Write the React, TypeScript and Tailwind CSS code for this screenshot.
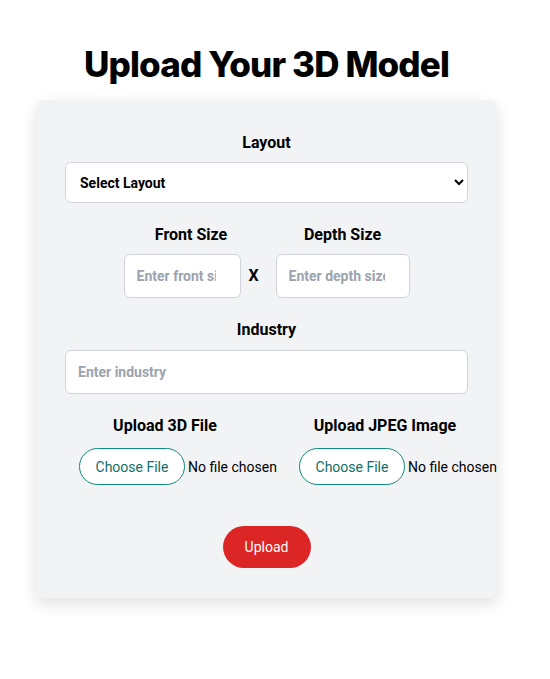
import { useState } from "react";

function FilePicker({ label }: { label: string }) {
  const [name, setName] = useState<string | null>(null);
  return (
    <div className="flex w-[220px] flex-col items-center">
      <span className="text-base font-bold leading-6 text-black">{label}</span>
      <label className="mt-[10px] flex w-full cursor-pointer items-center pl-6">
        <span className="flex h-[37px] w-[106px] shrink-0 items-center justify-center rounded-full border border-[#0f8a7e] bg-white text-sm text-[#0f6f66]">
          Choose File
        </span>
        <span className="ml-[3px] whitespace-nowrap text-sm text-black">
          {name ?? "No file chosen"}
        </span>
        <input
          type="file"
          className="hidden"
          onChange={(e) => setName(e.target.files?.[0]?.name ?? null)}
        />
      </label>
    </div>
  );
}

export default function App() {
  return (
    <div className="min-h-[679px] w-[533px] bg-white font-['Roboto',sans-serif]">
      <div className="flex flex-col items-center pt-[44px]">
        <h1 className="font-['Inter',sans-serif] text-[35px] leading-10 font-extrabold tracking-tight text-black">
          Upload Your 3D Model
        </h1>

        <form className="mt-4 w-[461px] rounded-lg bg-[#f2f3f5] px-[29px] pt-[31px] pb-[30px] shadow-[0_6px_16px_rgba(0,0,0,0.12)]">
          <div className="flex flex-col items-center">
            <span className="text-base font-bold leading-6 text-black">Layout</span>
            <select className="mt-[7px] h-[41px] w-full rounded-md border border-[#d1d5db] bg-white pl-[10px] pr-2 text-sm font-bold text-black">
              <option>Select Layout</option>
            </select>
          </div>

          <div className="mt-[20px] flex justify-center gap-[17px]">
            <div className="flex flex-col items-center">
              <span className="text-base font-bold leading-6 text-black">Front Size</span>
              <div className="mt-[7px] flex items-center gap-2">
                <input
                  placeholder="Enter front size"
                  className="h-[44px] w-[117px] rounded-md border border-[#d1d5db] bg-white pl-3 pr-6 text-sm font-bold placeholder:text-[#9ca3af]"
                />
                <span className="w-[10px] text-base font-bold text-black">X</span>
              </div>
            </div>
            <div className="flex flex-col items-center">
              <span className="text-base font-bold leading-6 text-black">Depth Size</span>
              <input
                placeholder="Enter depth size"
                className="mt-[7px] h-[44px] w-[134px] rounded-md border border-[#d1d5db] bg-white pl-3 pr-6 text-sm font-bold placeholder:text-[#9ca3af]"
              />
            </div>
          </div>

          <div className="mt-[20px] flex flex-col items-center">
            <span className="text-base font-bold leading-6 text-black">Industry</span>
            <input
              placeholder="Enter industry"
              className="mt-2 h-[44px] w-full rounded-md border border-[#d1d5db] bg-white px-3 text-sm font-bold placeholder:text-[#9ca3af]"
            />
          </div>

          <div className="mt-[20px] -ml-[10px] flex">
            <FilePicker label="Upload 3D File" />
            <FilePicker label="Upload JPEG Image" />
          </div>

          <div className="mt-[41px] flex justify-center">
            <button
              type="button"
              className="h-[42px] w-[88px] rounded-full bg-[#dc2626] text-sm text-white"
            >
              Upload
            </button>
          </div>
        </form>
      </div>
    </div>
  );
}
